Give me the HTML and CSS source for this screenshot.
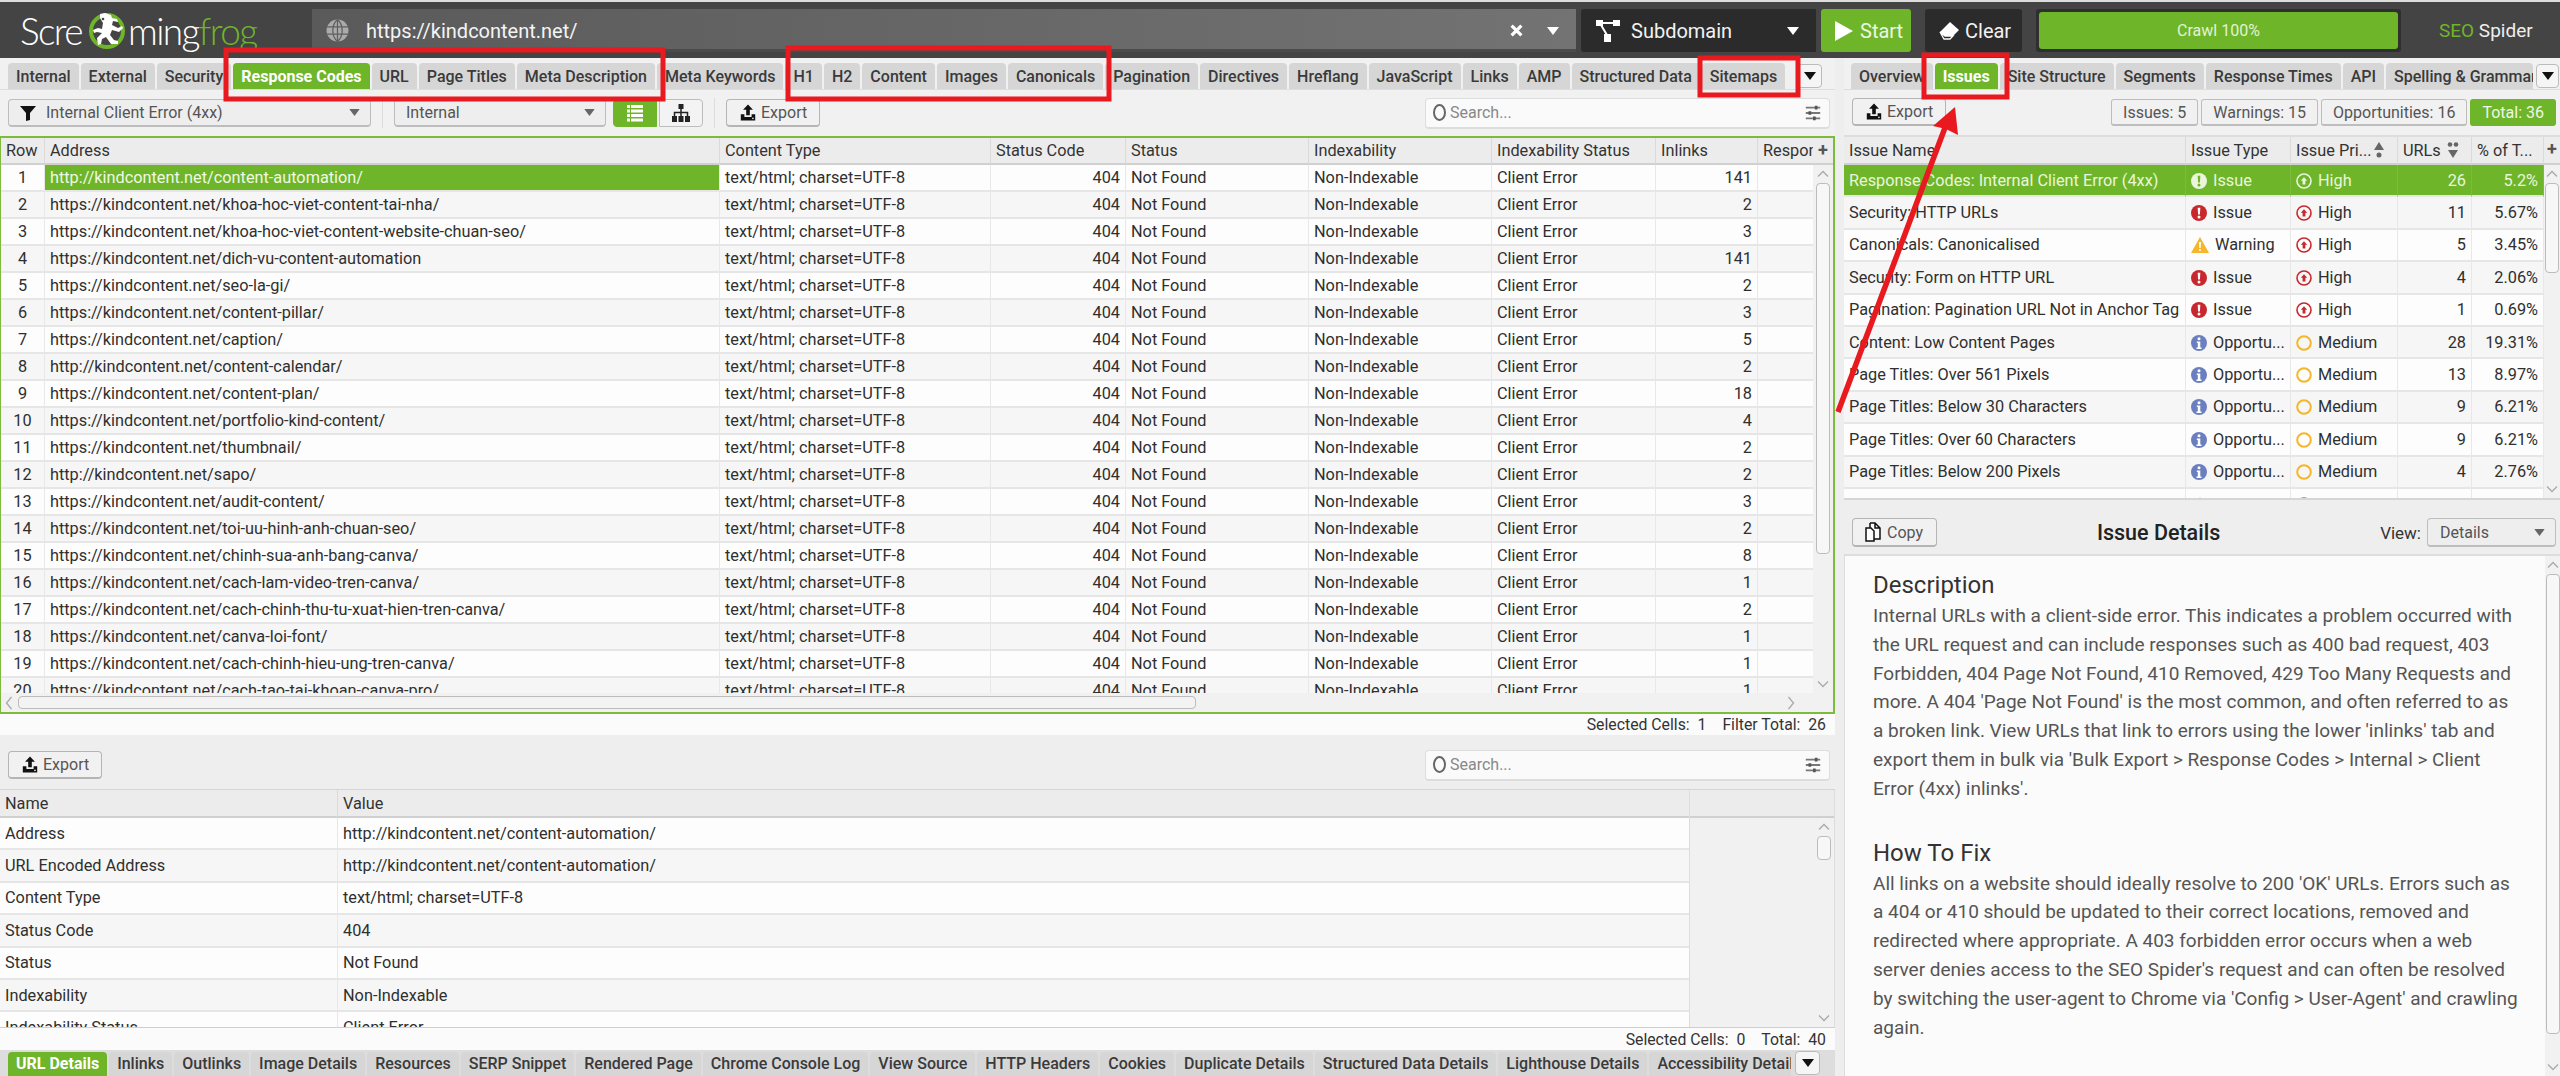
FILE: index.html
```html
<!DOCTYPE html>
<html lang="en">
<head>
    <meta charset="utf-8">
    <title>Screaming Frog SEO Spider</title>
    <link rel="stylesheet" href="styles.css">
</head>
<body>
    <!-- shared icons -->
    <svg class="defs" aria-hidden="true">
        <symbol id="i-export" viewBox="0 0 20 20"><path d="M10 1l5.5 6H12v6H8V7H4.500z" fill="#111"/><path d="M2 12h4v3h8v-3h4v7H2z" fill="#111"/><circle cx="15.500" cy="16.500" r="1" fill="#ddd"/></symbol>
        <symbol id="i-sliders" viewBox="0 0 20 20"><path d="M2 4h16M2 10h16M2 16h16" stroke="#777" stroke-width="2" fill="none"/><path d="M12 2h3v4h-3zM5 8h3v4H5zM10 14h3v4h-3z" fill="#555"/></symbol>
        <symbol id="i-issue" viewBox="0 0 16 16"><circle cx="8" cy="8" r="8" fill="currentColor"/><path d="M6.700 2.800h2.600l-.4 6.600H7.100z" fill="var(--ic-in, #fff)"/><circle cx="8" cy="12" r="1.500" fill="var(--ic-in, #fff)"/></symbol>
        <symbol id="i-high" viewBox="0 0 16 16"><circle cx="8" cy="8" r="7" fill="none" stroke="currentColor" stroke-width="1.600"/><path d="M8 4.200l3.200 3.600H9.400v3.700H6.600V7.800H4.800z" fill="currentColor"/></symbol>
        <symbol id="i-warn" viewBox="0 0 18 16"><path d="M9 0l9 16H0z" fill="#f5b62a"/><path d="M8 5h2l-.3 6H8.300z" fill="#fff"/><circle cx="9" cy="13" r="1.100" fill="#fff"/></symbol>
        <symbol id="i-info" viewBox="0 0 16 16"><circle cx="8" cy="8" r="8" fill="#6b7fc0"/><circle cx="8" cy="3.800" r="1.500" fill="#fff"/><path d="M5.800 6.500h3.500v6h1.200V14h-5v-1.500h1.300V8H5.800z" fill="#fff"/></symbol>
        <symbol id="i-medium" viewBox="0 0 16 16"><circle cx="8" cy="8" r="6.800" fill="none" stroke="#f5b62a" stroke-width="2"/></symbol>
        <symbol id="i-low" viewBox="0 0 16 16"><circle cx="8" cy="8" r="6.800" fill="none" stroke="#6b7fc0" stroke-width="2"/></symbol>
        <symbol id="i-chev" viewBox="0 0 12 8"><path d="M1 6.500L6 1.500l5 5" fill="none" stroke="#aaa" stroke-width="1.300"/></symbol>
        <symbol id="i-caret" viewBox="0 0 12 8"><path d="M0 0h12L6 8z" fill="currentColor"/></symbol>
    </svg>

    <div class="app">
        <header class="topbar">
            <div class="logo">
                <span>Scre</span>
                <svg class="frog" viewBox="0 0 38 38">
                    <circle cx="19" cy="19" r="16" fill="none" stroke="#6eb52a" stroke-width="4"/>
                    <path d="M17 1l6 2 1 3 5 1 1 3-5-1-1 4 6 3 4-2 1 2-4 4-7-2-2 5 4 5 4 1 0 3h-7l-5-7-4 2-1 5-3 1-1-7 5-5-5-1-3 1-1-3 5-2 4 1 1-6-3-5 0-4z" fill="#fff"/>
                    <circle cx="15" cy="7" r="1.300" fill="#444"/>
                </svg>
                <span>ming</span><span class="logo-green">frog</span>
            </div>
            <div class="urlbar">
                <svg class="globe" viewBox="0 0 22 22">
                    <circle cx="11" cy="11" r="10.500" fill="#ababab"/>
                    <path d="M0 7.500h22M0 14.500h22M11 0v22M11 .5c-6 5-6 16 0 21M11 .5c6 5 6 16 0 21" fill="none" stroke="#5f5f5f" stroke-width="1.200"/>
                </svg>
                <span class="url-text">https://kindcontent.net/</span>
                <svg class="url-x" viewBox="0 0 12 12"><path d="M1.500 1.500l9 9M10.500 1.500l-9 9" stroke="#fff" stroke-width="3"/></svg>
                <svg class="caret-w" viewBox="0 0 12 8"><use href="#i-caret"/></svg>
            </div>
            <div class="mode">
                <svg class="mode-ic" viewBox="0 0 24 22"><path d="M0 0h7v6H0zM17 0h7v6h-7zM8 14h7v8H8z" fill="#fff"/><path d="M5 3h14M5 5l6 10" stroke="#fff" stroke-width="2"/></svg>
                <span class="mode-text">Subdomain</span>
                <svg class="caret-w" viewBox="0 0 12 8"><use href="#i-caret"/></svg>
            </div>
            <div class="btn-start">
                <svg class="start-ic" viewBox="0 0 18 20"><path d="M0 0l18 10L0 20z" fill="#fff"/></svg>
                Start
            </div>
            <div class="btn-clear">
                <svg class="clear-ic" viewBox="0 0 20 18"><path d="M11 0l9 8-6 6H6L1 10z" fill="#fff"/><path d="M1 10l5 4h8l-3 3H5z" fill="#2b2b2b" stroke="#fff" stroke-width="1.300"/></svg>
                Clear
            </div>
            <div class="crawl"><div class="crawl-fill">Crawl 100%</div></div>
            <div class="brand"><span class="logo-green">SEO</span> Spider</div>
        </header>

        <div class="panes">
            <section class="left">
                <nav class="tabs">
                    <span class="tab">Internal</span>
                    <span class="tab">External</span>
                    <span class="tab">Security</span>
                    <span class="tab on">Response Codes</span>
                    <span class="tab">URL</span>
                    <span class="tab">Page Titles</span>
                    <span class="tab">Meta Description</span>
                    <span class="tab">Meta Keywords</span>
                    <span class="tab">H1</span>
                    <span class="tab">H2</span>
                    <span class="tab">Content</span>
                    <span class="tab">Images</span>
                    <span class="tab">Canonicals</span>
                    <span class="tab">Pagination</span>
                    <span class="tab">Directives</span>
                    <span class="tab">Hreflang</span>
                    <span class="tab">JavaScript</span>
                    <span class="tab">Links</span>
                    <span class="tab">AMP</span>
                    <span class="tab">Structured Data</span>
                    <span class="tab">Sitemaps</span>
                    <span class="tab-more"><svg class="caret-k" viewBox="0 0 12 8"><use href="#i-caret"/></svg></span>
                </nav>

                <div class="toolbar">
                    <div class="select sel-filter">
                        <svg class="funnel" viewBox="0 0 16 16"><path d="M0 1h16L10 8v7l-4 1V8z" fill="#111"/></svg>
                        <span class="sel-text">Internal Client Error (4xx)</span>
                        <svg class="caret-g" viewBox="0 0 12 8"><use href="#i-caret"/></svg>
                    </div>
                    <span class="sep"></span>
                    <div class="select sel-scope">
                        <span class="sel-text">Internal</span>
                        <svg class="caret-g" viewBox="0 0 12 8"><use href="#i-caret"/></svg>
                    </div>
                    <div class="view-toggle on">
                        <svg class="view-ic" viewBox="0 0 18 18"><path d="M1 1h16v3H1zM1 5.500h16v3H1zM1 10h16v3H1zM1 14.500h16v3H1z" fill="#fff"/><path d="M4.500 1v17" stroke="#6eb52a"/></svg>
                    </div>
                    <div class="view-toggle">
                        <svg class="view-ic" viewBox="0 0 18 18"><path d="M6.500 0h5v5h-5zM0 12h5v6H0zM6.500 12h5v6h-5zM13 12h5v6h-5z" fill="#222"/><path d="M9 5v7M2.500 12V8.500h13V12" stroke="#222" stroke-width="1.500" fill="none"/></svg>
                    </div>
                    <span class="sep"></span>
                    <div class="btn btn-export"><svg class="ic-export"><use href="#i-export"/></svg>Export</div>
                    <div class="search">
                        <span class="search-ring"></span>
                        <span class="search-text">Search...</span>
                        <svg class="ic-sliders"><use href="#i-sliders"/></svg>
                    </div>
                </div>

                <div class="grid-panel main-grid">
                    <div class="table-clip">
                        <table class="data url-table">
                            <colgroup><col class="c-row"><col class="c-addr"><col class="c-type"><col class="c-code"><col class="c-status"><col class="c-index"><col class="c-istat"><col class="c-inl"><col class="c-resp"></colgroup>
                            <thead><tr><th>Row</th><th>Address</th><th>Content Type</th><th>Status Code</th><th>Status</th><th>Indexability</th><th>Indexability Status</th><th>Inlinks</th><th>Respon</th></tr></thead>
                            <tbody>
                                <tr><td class="ctr">1</td><td class="sel">http://kindcontent.net/content-automation/</td><td>text/html; charset=UTF-8</td><td class="num">404</td><td>Not Found</td><td>Non-Indexable</td><td>Client Error</td><td class="num">141</td><td></td></tr>
                                <tr><td class="ctr">2</td><td>https://kindcontent.net/khoa-hoc-viet-content-tai-nha/</td><td>text/html; charset=UTF-8</td><td class="num">404</td><td>Not Found</td><td>Non-Indexable</td><td>Client Error</td><td class="num">2</td><td></td></tr>
                                <tr><td class="ctr">3</td><td>https://kindcontent.net/khoa-hoc-viet-content-website-chuan-seo/</td><td>text/html; charset=UTF-8</td><td class="num">404</td><td>Not Found</td><td>Non-Indexable</td><td>Client Error</td><td class="num">3</td><td></td></tr>
                                <tr><td class="ctr">4</td><td>https://kindcontent.net/dich-vu-content-automation</td><td>text/html; charset=UTF-8</td><td class="num">404</td><td>Not Found</td><td>Non-Indexable</td><td>Client Error</td><td class="num">141</td><td></td></tr>
                                <tr><td class="ctr">5</td><td>https://kindcontent.net/seo-la-gi/</td><td>text/html; charset=UTF-8</td><td class="num">404</td><td>Not Found</td><td>Non-Indexable</td><td>Client Error</td><td class="num">2</td><td></td></tr>
                                <tr><td class="ctr">6</td><td>https://kindcontent.net/content-pillar/</td><td>text/html; charset=UTF-8</td><td class="num">404</td><td>Not Found</td><td>Non-Indexable</td><td>Client Error</td><td class="num">3</td><td></td></tr>
                                <tr><td class="ctr">7</td><td>https://kindcontent.net/caption/</td><td>text/html; charset=UTF-8</td><td class="num">404</td><td>Not Found</td><td>Non-Indexable</td><td>Client Error</td><td class="num">5</td><td></td></tr>
                                <tr><td class="ctr">8</td><td>http://kindcontent.net/content-calendar/</td><td>text/html; charset=UTF-8</td><td class="num">404</td><td>Not Found</td><td>Non-Indexable</td><td>Client Error</td><td class="num">2</td><td></td></tr>
                                <tr><td class="ctr">9</td><td>https://kindcontent.net/content-plan/</td><td>text/html; charset=UTF-8</td><td class="num">404</td><td>Not Found</td><td>Non-Indexable</td><td>Client Error</td><td class="num">18</td><td></td></tr>
                                <tr><td class="ctr">10</td><td>https://kindcontent.net/portfolio-kind-content/</td><td>text/html; charset=UTF-8</td><td class="num">404</td><td>Not Found</td><td>Non-Indexable</td><td>Client Error</td><td class="num">4</td><td></td></tr>
                                <tr><td class="ctr">11</td><td>https://kindcontent.net/thumbnail/</td><td>text/html; charset=UTF-8</td><td class="num">404</td><td>Not Found</td><td>Non-Indexable</td><td>Client Error</td><td class="num">2</td><td></td></tr>
                                <tr><td class="ctr">12</td><td>http://kindcontent.net/sapo/</td><td>text/html; charset=UTF-8</td><td class="num">404</td><td>Not Found</td><td>Non-Indexable</td><td>Client Error</td><td class="num">2</td><td></td></tr>
                                <tr><td class="ctr">13</td><td>https://kindcontent.net/audit-content/</td><td>text/html; charset=UTF-8</td><td class="num">404</td><td>Not Found</td><td>Non-Indexable</td><td>Client Error</td><td class="num">3</td><td></td></tr>
                                <tr><td class="ctr">14</td><td>https://kindcontent.net/toi-uu-hinh-anh-chuan-seo/</td><td>text/html; charset=UTF-8</td><td class="num">404</td><td>Not Found</td><td>Non-Indexable</td><td>Client Error</td><td class="num">2</td><td></td></tr>
                                <tr><td class="ctr">15</td><td>https://kindcontent.net/chinh-sua-anh-bang-canva/</td><td>text/html; charset=UTF-8</td><td class="num">404</td><td>Not Found</td><td>Non-Indexable</td><td>Client Error</td><td class="num">8</td><td></td></tr>
                                <tr><td class="ctr">16</td><td>https://kindcontent.net/cach-lam-video-tren-canva/</td><td>text/html; charset=UTF-8</td><td class="num">404</td><td>Not Found</td><td>Non-Indexable</td><td>Client Error</td><td class="num">1</td><td></td></tr>
                                <tr><td class="ctr">17</td><td>https://kindcontent.net/cach-chinh-thu-tu-xuat-hien-tren-canva/</td><td>text/html; charset=UTF-8</td><td class="num">404</td><td>Not Found</td><td>Non-Indexable</td><td>Client Error</td><td class="num">2</td><td></td></tr>
                                <tr><td class="ctr">18</td><td>https://kindcontent.net/canva-loi-font/</td><td>text/html; charset=UTF-8</td><td class="num">404</td><td>Not Found</td><td>Non-Indexable</td><td>Client Error</td><td class="num">1</td><td></td></tr>
                                <tr><td class="ctr">19</td><td>https://kindcontent.net/cach-chinh-hieu-ung-tren-canva/</td><td>text/html; charset=UTF-8</td><td class="num">404</td><td>Not Found</td><td>Non-Indexable</td><td>Client Error</td><td class="num">1</td><td></td></tr>
                                <tr><td class="ctr">20</td><td>https://kindcontent.net/cach-tao-tai-khoan-canva-pro/</td><td>text/html; charset=UTF-8</td><td class="num">404</td><td>Not Found</td><td>Non-Indexable</td><td>Client Error</td><td class="num">1</td><td></td></tr>
                            </tbody>
                        </table>
                    </div>
                    <div class="vbar">
                        <div class="vbar-head">+</div>
                        <svg class="chev"><use href="#i-chev"/></svg>
                        <div class="thumb main-thumb"></div>
                        <div class="grow"></div>
                        <svg class="chev flip"><use href="#i-chev"/></svg>
                    </div>
                    <div class="hbar">
                        <svg class="chev-side" viewBox="0 0 8 14"><path d="M6.500 1L1.500 7l5 6" fill="none" stroke="#aaa" stroke-width="1.300"/></svg>
                        <div class="hthumb"></div>
                        <div class="grow"></div>
                        <svg class="chev-side" viewBox="0 0 8 14"><path d="M1.500 1l5 6-5 6" fill="none" stroke="#aaa" stroke-width="1.300"/></svg>
                    </div>
                    <div class="corner"></div>
                </div>
                <div class="status"><span>Selected Cells:&nbsp; 1</span><span>Filter Total:&nbsp; 26</span></div>

                <div class="toolbar toolbar-low">
                    <div class="btn btn-export"><svg class="ic-export"><use href="#i-export"/></svg>Export</div>
                    <div class="search">
                        <span class="search-ring"></span>
                        <span class="search-text">Search...</span>
                        <svg class="ic-sliders"><use href="#i-sliders"/></svg>
                    </div>
                </div>

                <div class="grid-panel low-grid">
                    <div class="table-clip">
                        <table class="data tall details-table">
                            <colgroup><col class="c-name"><col class="c-value"></colgroup>
                            <thead><tr><th>Name</th><th>Value</th></tr></thead>
                            <tbody>
                                <tr><td>Address</td><td>http://kindcontent.net/content-automation/</td></tr>
                                <tr><td>URL Encoded Address</td><td>http://kindcontent.net/content-automation/</td></tr>
                                <tr><td>Content Type</td><td>text/html; charset=UTF-8</td></tr>
                                <tr><td>Status Code</td><td>404</td></tr>
                                <tr><td>Status</td><td>Not Found</td></tr>
                                <tr><td>Indexability</td><td>Non-Indexable</td></tr>
                                <tr><td>Indexability Status</td><td>Client Error</td></tr>
                            </tbody>
                        </table>
                    </div>
                    <div class="side-gutter">
                        <div class="gutter-head"></div>
                        <div class="gutter-bar">
                            <svg class="chev"><use href="#i-chev"/></svg>
                            <div class="thumb low-thumb"></div>
                            <div class="grow"></div>
                            <svg class="chev flip"><use href="#i-chev"/></svg>
                        </div>
                    </div>
                </div>
                <div class="status"><span>Selected Cells:&nbsp; 0</span><span>Total:&nbsp; 40</span></div>

                <nav class="tabs tabs-low">
                    <span class="tab on">URL Details</span>
                    <span class="tab">Inlinks</span>
                    <span class="tab">Outlinks</span>
                    <span class="tab">Image Details</span>
                    <span class="tab">Resources</span>
                    <span class="tab">SERP Snippet</span>
                    <span class="tab">Rendered Page</span>
                    <span class="tab">Chrome Console Log</span>
                    <span class="tab">View Source</span>
                    <span class="tab">HTTP Headers</span>
                    <span class="tab">Cookies</span>
                    <span class="tab">Duplicate Details</span>
                    <span class="tab">Structured Data Details</span>
                    <span class="tab">Lighthouse Details</span>
                    <span class="tab tab-cut">Accessibility Details</span>
                    <span class="tab-more"><svg class="caret-k" viewBox="0 0 12 8"><use href="#i-caret"/></svg></span>
                </nav>
            </section>

            <section class="right">
                <nav class="tabs tabs-right">
                    <span class="tab">Overview</span>
                    <span class="tab on">Issues</span>
                    <span class="tab">Site Structure</span>
                    <span class="tab">Segments</span>
                    <span class="tab">Response Times</span>
                    <span class="tab">API</span>
                    <span class="tab tab-cut2">Spelling &amp; Grammar</span>
                    <span class="tab-more"><svg class="caret-k" viewBox="0 0 12 8"><use href="#i-caret"/></svg></span>
                </nav>

                <div class="toolbar toolbar-right">
                    <div class="btn btn-export"><svg class="ic-export"><use href="#i-export"/></svg>Export</div>
                    <div class="pills">
                        <span class="pill">Issues: 5</span>
                        <span class="pill">Warnings: 15</span>
                        <span class="pill">Opportunities: 16</span>
                        <span class="pill on">Total: 36</span>
                    </div>
                </div>

                <div class="issues-grid">
                    <div class="table-clip">
                        <table class="data tall issues-table">
                            <colgroup><col class="c-iname"><col class="c-itype"><col class="c-ipri"><col class="c-iurls"><col class="c-ipct"></colgroup>
                            <thead>
                                <tr>
                                    <th>Issue Name</th><th>Issue Type</th>
                                    <th><span class="th-sort">Issue Pri...<svg class="sort-ic" viewBox="0 0 12 16"><path d="M1 8l5-8 5 8z" fill="#666"/><circle cx="6" cy="13" r="2.500" fill="#666"/></svg></span></th>
                                    <th><span class="th-sort">URLs<svg class="sort-ic" viewBox="0 0 12 16"><circle cx="3" cy="2.500" r="2.300" fill="#666"/><circle cx="9" cy="2.500" r="2.300" fill="#666"/><path d="M1 8h10l-5 8z" fill="#666"/></svg></span></th>
                                    <th>% of T...</th>
                                </tr>
                            </thead>
                            <tbody>
                                <tr class="row-on"><td>Response Codes: Internal Client Error (4xx)</td><td><svg class="ic"><use href="#i-issue"/></svg>Issue</td><td><svg class="ic"><use href="#i-high"/></svg>High</td><td class="num">26</td><td class="num">5.2%</td></tr>
                                <tr><td>Security: HTTP URLs</td><td class="red"><svg class="ic"><use href="#i-issue"/></svg><b>Issue</b></td><td class="red"><svg class="ic"><use href="#i-high"/></svg><b>High</b></td><td class="num">11</td><td class="num">5.67%</td></tr>
                                <tr><td>Canonicals: Canonicalised</td><td><svg class="ic ic-w"><use href="#i-warn"/></svg>Warning</td><td class="red"><svg class="ic"><use href="#i-high"/></svg><b>High</b></td><td class="num">5</td><td class="num">3.45%</td></tr>
                                <tr><td>Security: Form on HTTP URL</td><td class="red"><svg class="ic"><use href="#i-issue"/></svg><b>Issue</b></td><td class="red"><svg class="ic"><use href="#i-high"/></svg><b>High</b></td><td class="num">4</td><td class="num">2.06%</td></tr>
                                <tr><td>Pagination: Pagination URL Not in Anchor Tag</td><td class="red"><svg class="ic"><use href="#i-issue"/></svg><b>Issue</b></td><td class="red"><svg class="ic"><use href="#i-high"/></svg><b>High</b></td><td class="num">1</td><td class="num">0.69%</td></tr>
                                <tr><td>Content: Low Content Pages</td><td><svg class="ic"><use href="#i-info"/></svg>Opportu...</td><td><svg class="ic"><use href="#i-medium"/></svg>Medium</td><td class="num">28</td><td class="num">19.31%</td></tr>
                                <tr><td>Page Titles: Over 561 Pixels</td><td><svg class="ic"><use href="#i-info"/></svg>Opportu...</td><td><svg class="ic"><use href="#i-medium"/></svg>Medium</td><td class="num">13</td><td class="num">8.97%</td></tr>
                                <tr><td>Page Titles: Below 30 Characters</td><td><svg class="ic"><use href="#i-info"/></svg>Opportu...</td><td><svg class="ic"><use href="#i-medium"/></svg>Medium</td><td class="num">9</td><td class="num">6.21%</td></tr>
                                <tr><td>Page Titles: Over 60 Characters</td><td><svg class="ic"><use href="#i-info"/></svg>Opportu...</td><td><svg class="ic"><use href="#i-medium"/></svg>Medium</td><td class="num">9</td><td class="num">6.21%</td></tr>
                                <tr><td>Page Titles: Below 200 Pixels</td><td><svg class="ic"><use href="#i-info"/></svg>Opportu...</td><td><svg class="ic"><use href="#i-medium"/></svg>Medium</td><td class="num">4</td><td class="num">2.76%</td></tr>
                                <tr><td>Security: Missing X-Frame-Options Header</td><td><svg class="ic ic-w"><use href="#i-warn"/></svg>Warning</td><td><svg class="ic"><use href="#i-low"/></svg>Low</td><td class="num">168</td><td class="num">33.47%</td></tr>
                            </tbody>
                        </table>
                    </div>
                    <div class="vbar vbar-right">
                        <div class="vbar-head">+</div>
                        <svg class="chev"><use href="#i-chev"/></svg>
                        <div class="thumb issues-thumb"></div>
                        <div class="grow"></div>
                        <svg class="chev flip"><use href="#i-chev"/></svg>
                    </div>
                </div>

                <div class="details-head">
                    <div class="btn btn-copy">
                        <svg class="ic-copy" viewBox="0 0 18 20"><path d="M6 1h5l5 5v11H9M6 1v5M11 1v5h5" fill="#fff" stroke="#111" stroke-width="1.500"/><path d="M2 6h5l3 3v10H2z" fill="#fff" stroke="#111" stroke-width="1.500"/></svg>
                        Copy
                    </div>
                    <h2 class="details-title">Issue Details</h2>
                    <span class="view-label">View:</span>
                    <div class="select sel-view">
                        <span class="sel-text">Details</span>
                        <svg class="caret-g" viewBox="0 0 12 8"><use href="#i-caret"/></svg>
                    </div>
                </div>

                <div class="details-body">
                    <article class="doc">
                        <h3>Description</h3>
                        <p>Internal URLs with a client-side error. This indicates a problem occurred with the URL request and can include responses such as 400 bad request, 403 Forbidden, 404 Page Not Found, 410 Removed, 429 Too Many Requests and more. A 404 'Page Not Found' is the most common, and often referred to as a broken link. View URLs that link to errors using the lower 'inlinks' tab and export them in bulk via 'Bulk Export &gt; Response Codes &gt; Internal &gt; Client Error (4xx) inlinks'.</p>
                        <h3>How To Fix</h3>
                        <p>All links on a website should ideally resolve to 200 'OK' URLs. Errors such as a 404 or 410 should be updated to their correct locations, removed and redirected where appropriate. A 403 forbidden error occurs when a web server denies access to the SEO Spider's request and can often be resolved by switching the user-agent to Chrome via 'Config &gt; User-Agent' and crawling again.</p>
                    </article>
                    <div class="vbar vbar-doc">
                        <svg class="chev"><use href="#i-chev"/></svg>
                        <div class="thumb doc-thumb"></div>
                        <div class="grow"></div>
                        <svg class="chev flip"><use href="#i-chev"/></svg>
                    </div>
                </div>
            </section>
        </div>
    </div>

    <!-- red annotations drawn on top of the screenshot -->
    <svg class="marks" viewBox="0 0 2560 1076">
        <g fill="none" stroke="#e8191f" stroke-width="5">
            <rect x="226" y="50" width="437" height="49"/>
            <rect x="788" y="48" width="321" height="51"/>
            <rect x="1700" y="58" width="98" height="37"/>
            <rect x="1924" y="55" width="83" height="42"/>
            <path d="M1946 125L1838 412" stroke-width="5.500"/>
        </g>
        <path d="M1955 107L1958 135L1946 129L1933 126z" fill="#e8191f"/>
    </svg>
</body>
</html>
```

FILE: styles.css
```css
*{box-sizing: border-box;}

html, body{
    margin: 0;
    width: 2560px;
    height: 1076px;
    overflow: hidden;
}

body{
    background-color: #eee;
    color: #333;
    font-family: Roboto, "Liberation Sans", sans-serif;
    font-size: 16px;
}

.defs{
    position: absolute;
    width: 0;
    height: 0;
}

.app{
    width: 2560px;
    height: 1076px;
    display: grid;
    grid-template-rows: 58px 1fr;
}

.grow{flex: 1;}

/* top bar */
.topbar{
    background-color: #444;
    border-top: 2px solid #ddd;
    padding-top: 7px;
    height: 58px;
    display: flex;
    align-items: flex-start;
}

.logo{
    width: 312px;
    height: 43px;
    padding-left: 20px;
    display: flex;
    align-items: center;
    color: #fff;
    font-family: Lato, sans-serif;
    font-weight: 300;
    font-size: 37px;
    letter-spacing: -1.600px;
}

.logo-green{color: #6eb52a;}

.frog{
    width: 38px;
    height: 38px;
    margin: 0 2px 0 6px;
}

.urlbar{
    width: 1264px;
    height: 43px;
    background: linear-gradient(90deg, #5a5a5a, #737373);
    box-shadow: inset 0 -3px 0 #4b4b4b;
    display: flex;
    align-items: center;
    padding-left: 14px;
    color: #fff;
}

.globe{
    width: 23px;
    height: 23px;
    margin-right: 17px;
}

.url-text{
    flex: 1;
    font-size: 20px;
    color: #f4f4f4;
}

.url-x{
    width: 13px;
    height: 13px;
    margin-right: 24px;
}

.caret-w{
    width: 12px;
    height: 8px;
    color: #fff;
    margin-right: 17px;
    flex: none;
}

.mode{
    width: 235px;
    height: 43px;
    margin-left: 5px;
    background-color: #2b2b2b;
    border-radius: 3px 0 0 3px;
    display: flex;
    align-items: center;
    padding-left: 15px;
    color: #f2f2f2;
    font-size: 20px;
}

.mode-ic{
    width: 24px;
    height: 22px;
    margin-right: 11px;
}

.mode-text{flex: 1;}

.btn-start{
    width: 90px;
    height: 43px;
    margin-left: 5px;
    background-color: #6eb52a;
    border-radius: 3px;
    display: flex;
    align-items: center;
    gap: 7px;
    padding-left: 14px;
    color: #eef7e4;
    font-size: 20px;
}

.start-ic{
    width: 18px;
    height: 20px;
}

.btn-clear{
    width: 97px;
    height: 43px;
    margin-left: 14px;
    background-color: #2b2b2b;
    border-radius: 3px;
    display: flex;
    align-items: center;
    gap: 6px;
    padding-left: 14px;
    color: #f2f2f2;
    font-size: 20px;
}

.clear-ic{
    width: 20px;
    height: 18px;
}

.crawl{
    width: 365px;
    height: 43px;
    margin-left: 14px;
    padding: 3px;
    background-color: #2f2f2f;
    border-radius: 3px;
}

.crawl-fill{
    height: 100%;
    background-color: #6eb52a;
    border-radius: 3px;
    color: #e3f2d2;
    font-size: 16px;
    display: flex;
    align-items: center;
    justify-content: center;
}

.brand{
    margin-left: 38px;
    height: 43px;
    line-height: 43px;
    color: #eee;
    font-size: 19px;
}

/* panes */
.panes{
    display: grid;
    grid-template-columns: 1840px 720px;
    min-height: 0;
}

.left{
    display: grid;
    grid-template-rows: 32px 46px 578px 21px 54px 239px 22px 26px;
    padding-right: 5px;
    min-width: 0;
}

.right{
    display: grid;
    grid-template-rows: 32px 47px 363px 56px 1fr;
    padding-left: 4px;
    min-width: 0;
    min-height: 0;
}

/* tabs */
.tabs{
    display: flex;
    align-items: flex-end;
    gap: 2px;
    padding-left: 8px;
    border-bottom: 1px solid #ddd;
    background-color: #f1f1f1;
    overflow: hidden;
}

.tab{
    height: 26px;
    line-height: 27px;
    padding: 0 8px;
    background-color: #d6d6d6;
    border-radius: 4px 4px 0 0;
    font-size: 16px;
    font-weight: 500;
    color: #3a3a3a;
    white-space: nowrap;
    flex: none;
}

.tab.on{
    background-color: #6eb52a;
    color: #fff;
    font-weight: 700;
}

.tab-more{
    width: 25px;
    height: 24px;
    margin: 0 0 1px 10px;
    background-color: #f5f5f5;
    border: 1px solid #bbb;
    border-radius: 4px;
    display: flex;
    align-items: center;
    justify-content: center;
    flex: none;
}

.caret-k{
    width: 12px;
    height: 8px;
    color: #111;
}

.tabs-low{
    align-items: flex-end;
    background-color: #ddd;
    border-bottom: none;
}

.tabs-low .tab{
    height: 24px;
    line-height: 24px;
}

.tabs-low .tab-more{margin-left: 2px;}

.tab-cut{
    width: 142px;
    overflow: hidden;
}

.tabs-right{padding-left: 7px;}

.tab-cut2{
    width: 147px;
    overflow: hidden;
    padding-right: 0;
}

.tabs-right .tab-more{
    margin-left: 1px;
    width: 23px;
}

/* toolbars */
.toolbar{
    display: flex;
    align-items: center;
    padding: 0 8px;
    background-color: #f1f1f1;
}

.select{
    height: 28px;
    background-color: #eee;
    border: 1px solid #bdbdbd;
    border-bottom-width: 2px;
    border-radius: 4px;
    display: flex;
    align-items: center;
    padding: 0 10px 0 7px;
    color: #555;
}

.sel-text{flex: 1;}

.caret-g{
    width: 11px;
    height: 7px;
    color: #666;
}

.sel-filter{width: 363px;}

.funnel{
    width: 16px;
    height: 16px;
    margin: 0 10px 0 4px;
}

.sep{
    width: 1px;
    height: 30px;
    background-color: #ddd;
    margin: 0 11px;
}

.sel-scope{
    width: 212px;
    padding-left: 11px;
}

.view-toggle{
    width: 44px;
    height: 28px;
    margin-left: 2px;
    background-color: #f3f3f3;
    border: 1px solid #bdbdbd;
    border-radius: 0 4px 4px 0;
    display: flex;
    align-items: center;
    justify-content: center;
}

.view-toggle.on{
    margin-left: 7px;
    background-color: #6eb52a;
    border-color: #6eb52a;
    border-radius: 4px 0 0 4px;
}

.view-ic{
    width: 18px;
    height: 18px;
}

.btn{
    height: 28px;
    background-color: #f1f1f1;
    border: 1px solid #b5b5b5;
    border-bottom-width: 2px;
    border-radius: 4px;
    display: flex;
    align-items: center;
    color: #555;
}

.btn-export{
    width: 94px;
    padding-left: 12px;
    gap: 4px;
}

.ic-export{
    width: 18px;
    height: 19px;
}

.search{
    width: 405px;
    height: 31px;
    margin-left: auto;
    margin-right: -3px;
    background-color: #fafafa;
    border: 1px solid #ddd;
    border-bottom-width: 2px;
    border-radius: 4px;
    display: flex;
    align-items: center;
    padding: 0 7px;
    color: #888;
}

.search-ring{
    width: 13px;
    height: 17px;
    border: 2px solid #666;
    border-radius: 50%;
    margin-right: 4px;
}

.search-text{flex: 1;}

.ic-sliders{
    width: 18px;
    height: 18px;
}

/* tables */
.grid-panel{
    display: grid;
    min-height: 0;
}

.main-grid{
    grid-template-columns: 1fr 20px;
    grid-template-rows: 1fr 19px;
    border-top: 2px solid #7dbb3c;
    border-right: 2px solid #7dbb3c;
    border-bottom: 2px solid #7dbb3c;
    border-left: 1px solid #7dbb3c;
    background-color: #f1f1f1;
}

.table-clip{
    overflow: hidden;
    min-height: 0;
}

.data{
    border-collapse: separate;
    border-spacing: 0;
    table-layout: fixed;
    width: 100%;
    font-size: 16.300px;
}

.data th{
    height: 27px;
    background-color: #ececec;
    border-right: 1px solid #dadada;
    border-bottom: 2px solid #d0d0d0;
    padding: 0 5px;
    text-align: left;
    font-weight: 400;
    color: #333;
    white-space: nowrap;
    overflow: hidden;
}

.data.tall th{height: 28px;}

.data td{
    height: 27px;
    padding: 0 5px;
    background-color: #fdfdfd;
    border-right: 1px solid #e8e8e8;
    border-bottom: 2px solid #e6e6e6;
    color: #2f2f2f;
    white-space: nowrap;
    overflow: hidden;
}

.data tbody tr:nth-child(even) td{background-color: #f6f6f6;}

.data .ctr{text-align: center;}

.data .num{text-align: right;}

.data td.sel{
    background-color: #6eb52a;
    color: #f0f8e6;
}

.c-row{width: 44px;}
.c-addr{width: 675px;}
.c-type{width: 271px;}
.c-code{width: 135px;}
.c-status{width: 183px;}
.c-index{width: 183px;}
.c-istat{width: 164px;}
.c-inl{width: 102px;}
.c-resp{width: 56px;}

.url-table{width: 1813px;}

.vbar{
    display: flex;
    flex-direction: column;
    align-items: center;
    background-color: #f1f1f1;
}

.vbar-head{
    width: 100%;
    height: 27px;
    background-color: #ececec;
    border-bottom: 2px solid #d0d0d0;
    text-align: center;
    line-height: 24px;
    font-size: 18px;
    font-weight: 700;
    color: #555;
    flex: none;
}

.chev{
    width: 12px;
    height: 8px;
    margin: 5px 0;
    flex: none;
}

.chev.flip{transform: rotate(180deg);}

.thumb{
    width: 14px;
    background-color: #f7f7f7;
    border: 1px solid #bcbcbc;
    border-radius: 4px;
    flex: none;
}

.main-thumb{height: 371px;}

.hbar{
    display: flex;
    align-items: center;
    padding: 0 18px 0 4px;
}

.chev-side{
    width: 8px;
    height: 14px;
    flex: none;
}

.hthumb{
    width: 1178px;
    height: 13px;
    margin-left: 5px;
    background-color: #f3f3f3;
    border: 1px solid #bcbcbc;
    border-radius: 4px;
}

.corner{background-color: #f1f1f1;}

.status{
    display: flex;
    justify-content: flex-end;
    align-items: center;
    gap: 16px;
    padding-right: 9px;
    background-color: #fbfbfb;
    font-size: 15.800px;
    color: #333;
}

.toolbar-low{
    padding-top: 6px;
    align-items: center;
    background-color: #eee;
}

/* lower table */
.low-grid{
    grid-template-columns: 1689px 1fr;
    border-top: 1px solid #d5d5d5;
    border-bottom: 1px solid #cfcfcf;
    background-color: #f1f1f1;
}

.data.tall td{height: 32.400px;}

.c-name{width: 338px;}

.details-table th{border-right: 1px solid #dadada;}

.details-table th:last-child,
.details-table td:last-child{border-right: none;}

.side-gutter{
    display: flex;
    flex-direction: column;
    border-left: 1px solid #ddd;
    border-right: 1px solid #ddd;
}

.gutter-head{
    height: 28px;
    background-color: #ececec;
    border-bottom: 2px solid #d0d0d0;
    flex: none;
}

.gutter-bar{
    flex: 1;
    width: 20px;
    margin-left: auto;
    display: flex;
    flex-direction: column;
    align-items: center;
}

.low-thumb{height: 24px;}

/* right side */
.toolbar-right{
    padding: 0 4px 3px 8px;
    justify-content: space-between;
}

.pills{
    display: flex;
    gap: 3px;
}

.pill{
    height: 27px;
    padding: 0 11px;
    background-color: #f1f1f1;
    border: 1px solid #bdbdbd;
    border-bottom-width: 2px;
    border-radius: 3px;
    line-height: 25px;
    color: #555;
    white-space: nowrap;
}

.pill.on{
    background-color: #6eb52a;
    border-color: #6eb52a;
    color: #eef7e4;
}

.issues-grid{
    display: grid;
    grid-template-columns: 700px 1fr;
    border-top: 2px solid #ddd;
    border-bottom: 2px solid #d5d5d5;
    margin-top: -2px;
    min-height: 0;
}

.c-iname{width: 342px;}
.c-itype{width: 105px;}
.c-ipri{width: 107px;}
.c-iurls{width: 74px;}
.c-ipct{width: 72px;}

.issues-table td:nth-child(-n+3){padding-left: 5px;}

.issues-table .row-on td{
    background-color: #6eb52a;
    color: #eaf5dc;
    border-right-color: #7dbb3c;
    --ic-in: #6eb52a;
}

.ic{
    width: 16px;
    height: 16px;
    margin-right: 6px;
    vertical-align: -3px;
}

.ic-w{
    width: 18px;
}

.red{color: #c8282d;}

.data td.red{color: #c8282d;}

.red b{
    font-weight: 400;
    color: #2f2f2f;
}

.th-sort{
    display: flex;
    align-items: center;
    justify-content: space-between;
    padding-right: 7px;
}

.sort-ic{
    width: 12px;
    height: 16px;
    flex: none;
}

.vbar-right .vbar-head{height: 28px;}

.issues-thumb{height: 90px;}

.vbar-right .grow{flex: 1;}

.details-head{
    display: flex;
    align-items: center;
    padding: 11px 4px 0 8px;
    background-color: #eee;
    border-bottom: 2px solid #ddd;
}

.btn-copy{
    width: 85px;
    height: 29px;
    padding-left: 11px;
    gap: 5px;
}

.ic-copy{
    width: 18px;
    height: 20px;
}

.details-title{
    flex: 1;
    margin: 0;
    text-align: center;
    font-size: 21.500px;
    font-weight: 500;
    color: #222;
}

.view-label{
    margin-right: 6px;
    font-size: 17px;
}

.sel-view{
    width: 129px;
    height: 29px;
    padding: 0 10px 0 12px;
}

.details-body{
    display: grid;
    grid-template-columns: 701px 1fr;
    min-height: 0;
}

.doc{
    background-color: #fbfbfb;
    border-left: 1px solid #ddd;
    padding: 12px 0 0 28px;
    overflow: hidden;
}

.doc h3{
    margin: 0;
    height: 34px;
    line-height: 34px;
    font-size: 24px;
    font-weight: 400;
    color: #333;
}

.doc p{
    width: 650px;
    margin: 0 0 32px;
    font-size: 19px;
    line-height: 28.800px;
    color: #555;
}

.vbar-doc .doc-thumb{height: 460px;}

.vbar-doc{padding-top: 0;}

/* annotations */
.marks{
    position: absolute;
    left: 0;
    top: 0;
    width: 2560px;
    height: 1076px;
    pointer-events: none;
}
```
